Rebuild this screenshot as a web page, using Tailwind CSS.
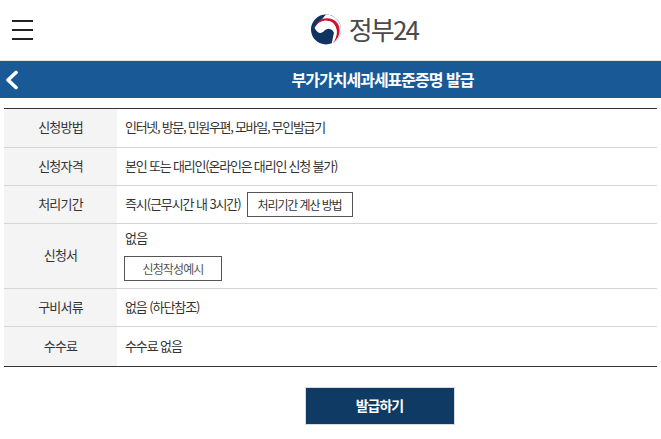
<!DOCTYPE html>
<html lang="ko">
<head>
    <meta charset="UTF-8">
    <meta name="viewport" content="width=device-width, initial-scale=1.0">
    <title>부가가치세과세표준증명 발급</title>
    <script src="https://cdn.jsdelivr.net/npm/@tailwindcss/browser@4"></script>
</head>
<body class="bg-white font-['Noto_Sans_CJK_KR',sans-serif] text-[13px] text-[#333] tracking-[-0.8px] overflow-hidden">
    <!-- Header -->
    <header class="relative h-[60px] flex items-center justify-center">
        <div class="absolute left-[12px] top-[20px] w-[21px] flex flex-col gap-[7px]">
            <span class="block h-[2px] bg-[#222]"></span>
            <span class="block h-[2px] bg-[#222]"></span>
            <span class="block h-[2px] bg-[#222]"></span>
        </div>
        <div class="flex items-center gap-[7px] ml-[67px] -mt-[2px]">
            <svg width="32" height="31" viewBox="0 0 32 32">
                <circle cx="16" cy="16" r="15.500" fill="#0f3460"/>
                <path d="M16 .5C24.500.5 31.500 7.500 31.500 16c0 6-3.500 11.500-8.500 14h-1l3-14.500L16 7 6 12l-1.500 2Z" fill="#fff"/>
                <path d="M4.500 14C6.500 8 11 4.500 17 4.500 25 4.500 30 10 30 17c0 5-2.500 9.500-6.500 12.500 2.500-4 3.800-8 3.500-12C26.500 11 22 7 16.500 7 11 7 7 9.500 4.500 14Z" fill="#d0102e"/>
                <path d="M4.500 14C7 9.500 11 7 16.500 7 22 7 26.500 11 27 17.500c.3 4-1 8-3.500 12 1.500-4 2-8.500 0-11.500-2-3-5-3.500-7.500-2-2.500 1.500-3.500 4-6.500 3.500-2.500-.5-4-2.500-5.500-5.500Z" fill="#fff"/>
            </svg>
            <span class="text-[26px] leading-none text-[#4a4a4a] tracking-[-1.800px]">정부24</span>
        </div>
    </header>

    <!-- Title bar -->
    <div class="relative h-[38px] bg-[#195a96] flex items-center justify-center border-t border-[#dfe5ec]">
        <svg class="absolute left-[4px] top-[9px]" width="15" height="20" viewBox="0 0 15 20" fill="none">
            <path d="M12 2.500 4 10l8 7.500" stroke="#fff" stroke-width="3.600" stroke-linecap="round" stroke-linejoin="round"/>
        </svg>
        <h1 class="ml-[104px] -mt-[2px] text-[16px] font-bold text-white tracking-[-1px]">부가가치세과세표준증명 발급</h1>
    </div>

    <!-- Info table -->
    <div class="mx-[4px] mt-[10px] border-t border-b border-[#333] flex flex-col">
        <div class="flex h-[39px] border-b border-[#d5d5d5]">
            <div class="w-[113px] bg-[#f4f4f4] flex items-center justify-center pb-[2px]">신청방법</div>
            <div class="flex-1 pl-[8px] flex items-center pb-[2px] tracking-[-1.300px]">인터넷, 방문, 민원우편, 모바일, 무인발급기</div>
        </div>
        <div class="flex h-[38px] border-b border-[#d5d5d5]">
            <div class="w-[113px] bg-[#f4f4f4] flex items-center justify-center pb-[2px]">신청자격</div>
            <div class="flex-1 pl-[8px] flex items-center pb-[2px] tracking-[-1.200px]">본인 또는 대리인(온라인은 대리인 신청 불가)</div>
        </div>
        <div class="flex h-[38px] border-b border-[#d5d5d5]">
            <div class="w-[113px] bg-[#f4f4f4] flex items-center justify-center pb-[2px]">처리기간</div>
            <div class="flex-1 pl-[8px] flex items-center gap-[6px]">
                <span class="-mt-[2px] tracking-[-1.100px]">즉시(근무시간 내 3시간)</span>
                <span class="w-[106px] h-[25px] border border-[#555] flex items-center justify-center text-[12px] tracking-[-1.100px]">처리기간 계산 방법</span>
            </div>
        </div>
        <div class="flex h-[65px] border-b border-[#d5d5d5]">
            <div class="w-[113px] bg-[#f4f4f4] flex items-center justify-center pb-[2px]">신청서</div>
            <div class="flex-1 pl-[7px] flex flex-col items-start">
                <span class="ml-[1px] mt-[4px] leading-[19px]">없음</span>
                <span class="mt-[9px] w-[98px] h-[25px] border border-[#555] flex items-center justify-center text-[12px] text-[#555] tracking-[-0.9px]">신청작성예시</span>
            </div>
        </div>
        <div class="flex h-[38px] border-b border-[#d5d5d5]">
            <div class="w-[113px] bg-[#f4f4f4] flex items-center justify-center pb-[2px]">구비서류</div>
            <div class="flex-1 pl-[8px] flex items-center pb-[2px] tracking-[-1.100px]">없음 (하단참조)</div>
        </div>
        <div class="flex h-[39px]">
            <div class="w-[113px] bg-[#f4f4f4] flex items-center justify-center pb-[2px]">수수료</div>
            <div class="flex-1 pl-[8px] flex items-center pb-[2px] tracking-[-1.100px]">수수료 없음</div>
        </div>
    </div>

    <!-- Action -->
    <div class="flex justify-center mt-[20px]">
        <button class="ml-[98px] w-[150px] h-[38px] bg-[#0f3a63] border border-[#d5dae0] text-white text-[14px] tracking-[-1px] font-bold pb-[2px]">발급하기</button>
    </div>
</body>
</html>
